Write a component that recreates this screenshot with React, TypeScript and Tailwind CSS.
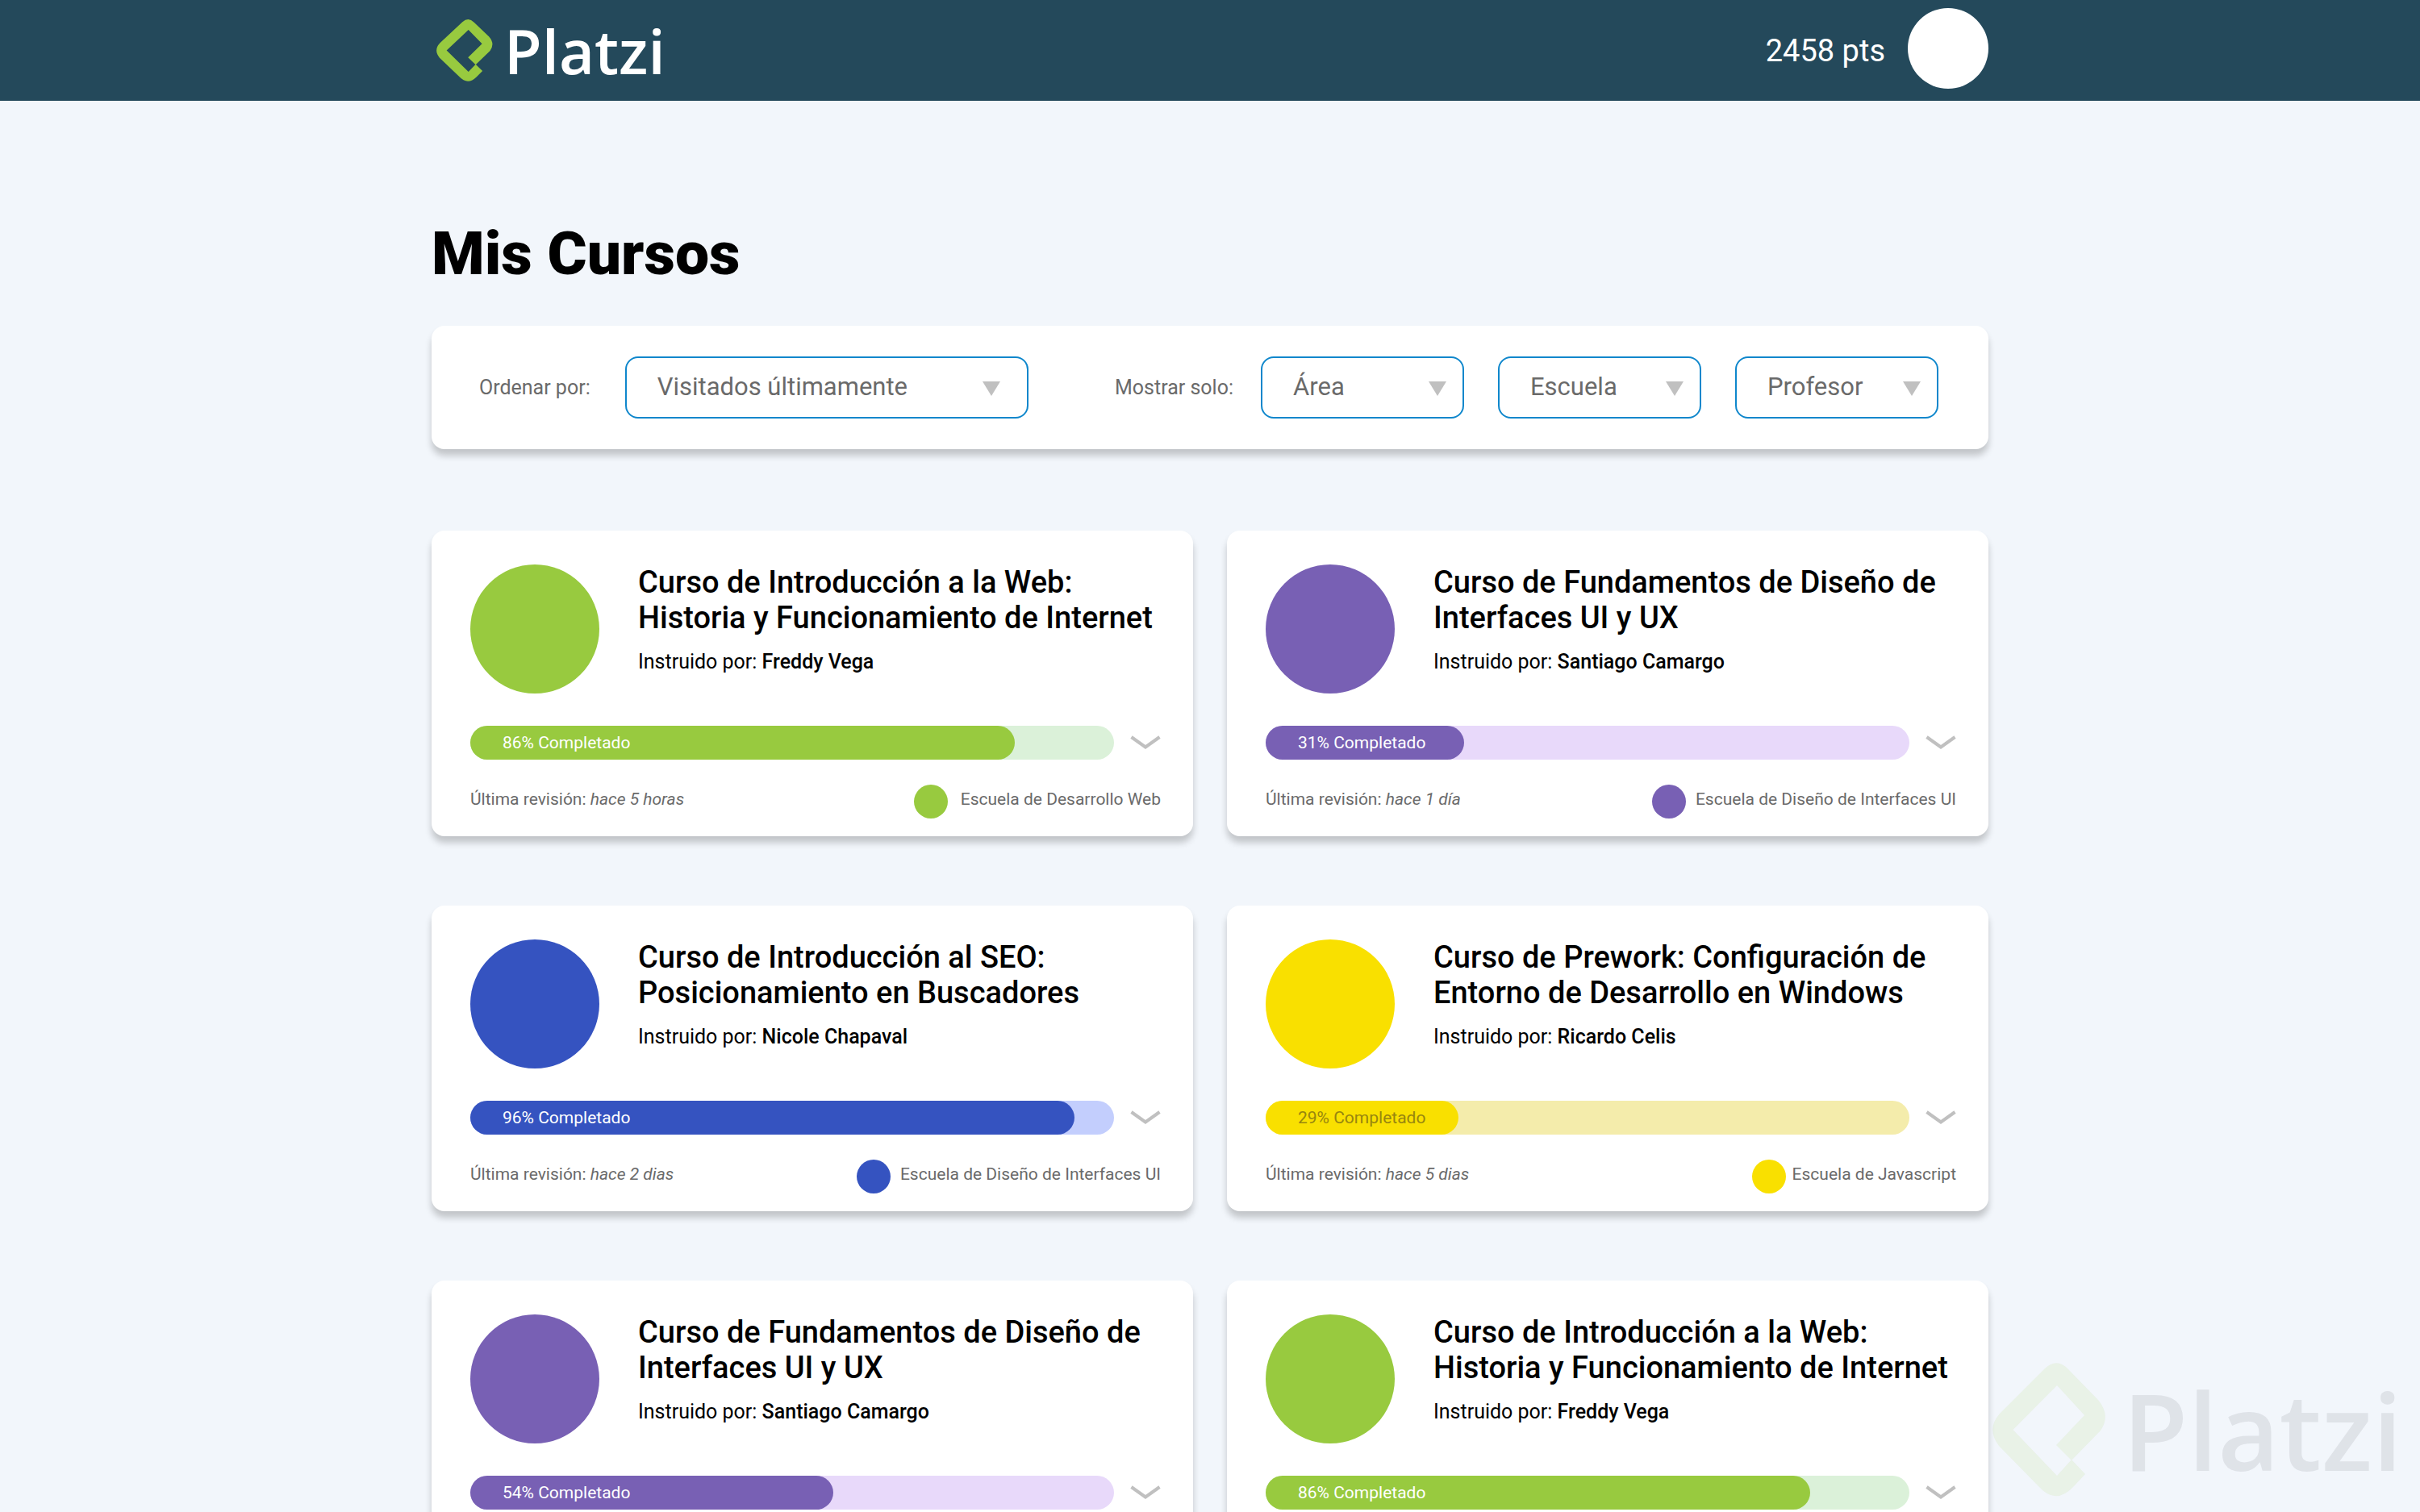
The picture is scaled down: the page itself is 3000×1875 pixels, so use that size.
import React from "react";

type School = {
  name: string;
  gap: string;
};

type Course = {
  title: string[];
  teacher: string;
  progress: number;
  fill: number;
  lastSeen: string;
  school: School;
  color: string;
  track: string;
  label: string;
};

const web: School = { name: "Escuela de Desarrollo Web", gap: "gap-4" };
const ui: School = { name: "Escuela de Diseño de Interfaces UI", gap: "gap-3" };
const js: School = { name: "Escuela de Javascript", gap: "gap-2" };

const courses: Course[] = [
  {
    title: ["Curso de Introducción a la Web:", "Historia y Funcionamiento de Internet"],
    teacher: "Freddy Vega",
    progress: 86,
    fill: 84.6,
    lastSeen: "hace 5 horas",
    school: web,
    color: "bg-[#98ca3f]",
    track: "bg-[#dbf1d9]",
    label: "text-white",
  },
  {
    title: ["Curso de Fundamentos de Diseño de", "Interfaces UI y UX"],
    teacher: "Santiago Camargo",
    progress: 31,
    fill: 30.8,
    lastSeen: "hace 1 día",
    school: ui,
    color: "bg-[#7860b4]",
    track: "bg-[#e8d9fa]",
    label: "text-white",
  },
  {
    title: ["Curso de Introducción al SEO:", "Posicionamiento en Buscadores"],
    teacher: "Nicole Chapaval",
    progress: 96,
    fill: 93.8,
    lastSeen: "hace 2 dias",
    school: ui,
    color: "bg-[#3553c0]",
    track: "bg-[#c3cefd]",
    label: "text-white",
  },
  {
    title: ["Curso de Prework: Configuración de", "Entorno de Desarrollo en Windows"],
    teacher: "Ricardo Celis",
    progress: 29,
    fill: 30,
    lastSeen: "hace 5 dias",
    school: js,
    color: "bg-[#f9e000]",
    track: "bg-[#f4ecab]",
    label: "text-[#98860f]",
  },
  {
    title: ["Curso de Fundamentos de Diseño de", "Interfaces UI y UX"],
    teacher: "Santiago Camargo",
    progress: 54,
    fill: 56.4,
    lastSeen: "hace 1 día",
    school: ui,
    color: "bg-[#7860b4]",
    track: "bg-[#e8d9fa]",
    label: "text-white",
  },
  {
    title: ["Curso de Introducción a la Web:", "Historia y Funcionamiento de Internet"],
    teacher: "Freddy Vega",
    progress: 86,
    fill: 84.6,
    lastSeen: "hace 5 horas",
    school: web,
    color: "bg-[#98ca3f]",
    track: "bg-[#dbf1d9]",
    label: "text-white",
  },
];

const LogoMark = ({ className }: { className: string }) => (
  <svg
    viewBox="0 0 141 166"
    preserveAspectRatio="none"
    className={className}
    fill="#98ca3f"
    aria-hidden="true"
  >
    <path d="M98 121L134 84Q147 65 131 46L94 8Q80 -7 65 7L9 63Q-8 82 8 103L57 153Q78 177 100 154L115 138L98 120L80 140L25.5 83L80 28L114 65L79 102Z" />
  </svg>
);

const Header = () => {
  return (
    <header className="bg-[#24495b]">
      <div className="mx-auto flex h-[125px] w-11/12 max-w-[1930px] items-center justify-between">
        <a href="#" className="flex items-center gap-[14px] pl-[6px]">
          <LogoMark className="h-[77px] w-[70px]" />
          <span className="font-['Open_Sans',sans-serif] text-[76px] leading-[100px] font-semibold text-white">
            Platzi
          </span>
        </a>
        <div className="flex items-center gap-[28px]">
          <p className="text-[38px] leading-[44px] text-white">2458 pts</p>
          <div className="mb-[5px] h-[100px] w-[100px] rounded-full bg-white" />
        </div>
      </div>
    </header>
  );
};

type FilterProps = {
  id: string;
  label: string;
  option: string;
  width: string;
  arrow: string;
};

const Filter = ({ id, label, option, width, arrow }: FilterProps) => {
  return (
    <div className={`relative ${width}`}>
      <select
        id={id}
        aria-label={label}
        className="block h-[77px] w-full appearance-none rounded-[16px] border-2 border-[#0f87cc] bg-white pl-[38px] text-[31px] text-[#6a6a6a]"
      >
        <option>{option}</option>
      </select>
      <svg
        viewBox="0 0 22 18"
        className={`pointer-events-none absolute top-[31px] h-[18px] w-[22px] ${arrow}`}
        fill="#c0c0c0"
        aria-hidden="true"
      >
        <path d="M0 0H22L11 18Z" />
      </svg>
    </div>
  );
};

const Filters = () => {
  return (
    <div className="mt-[46px] flex flex-wrap items-center justify-between gap-6 rounded-[16px] bg-white py-[38px] pr-[62px] pl-[59px] text-[25px] text-[#6a6a6a] shadow-[0_8px_8px_rgba(0,0,0,0.2)]">
      <div className="flex items-center gap-[43px]">
        <label htmlFor="order" className="leading-[30px]">
          Ordenar por:
        </label>
        <Filter
          id="order"
          label="Ordenar por"
          option="Visitados últimamente"
          width="w-[500px]"
          arrow="right-[35px]"
        />
      </div>
      <div className="flex items-center gap-[42px]">
        <div className="flex items-center gap-[34px]">
          <label htmlFor="area" className="leading-[30px]">
            Mostrar solo:
          </label>
          <Filter id="area" label="Área" option="Área" width="w-[252px]" arrow="right-[22px]" />
        </div>
        <Filter
          id="school"
          label="Escuela"
          option="Escuela"
          width="w-[252px]"
          arrow="right-[22px]"
        />
        <Filter
          id="teacher"
          label="Profesor"
          option="Profesor"
          width="w-[252px]"
          arrow="right-[22px]"
        />
      </div>
    </div>
  );
};

const CourseCard = ({ course }: { course: Course }) => {
  return (
    <article className="rounded-[16px] bg-white pt-[42px] pr-[40px] pb-[22px] pl-[48px] shadow-[0_8px_8px_rgba(0,0,0,0.2)]">
      <div className="flex gap-[48px]">
        <div className={`h-[160px] w-[160px] shrink-0 rounded-full ${course.color}`} />
        <div>
          <h2 className="text-[38px] leading-[44px] font-medium">
            {course.title[0]}
            <br />
            {course.title[1]}
          </h2>
          <p className="mt-4 text-[25px] leading-[34px]">
            Instruido por: <span className="font-medium">{course.teacher}</span>
          </p>
        </div>
      </div>
      <div className="mt-[40px] flex items-center gap-[20px]">
        <div className={`h-[42px] flex-1 rounded-full ${course.track}`}>
          <div
            className={`flex h-full items-center rounded-full pl-[40px] ${course.color}`}
            style={{ width: `${course.fill}%` }}
          >
            <span className={`text-[21px] leading-[26px] whitespace-nowrap ${course.label}`}>
              {course.progress}% Completado
            </span>
          </div>
        </div>
        <button type="button" aria-label="Ver detalles">
          <svg
            viewBox="0 0 38 18"
            className="h-[18px] w-[38px]"
            fill="none"
            stroke="#c0c0c0"
            strokeWidth="4"
            aria-hidden="true"
          >
            <path d="M1.5 2L19 14.5L36.5 2" />
          </svg>
        </button>
      </div>
      <div className="mt-[31px] flex items-start justify-between text-[21px] leading-[36px] text-[#6a6a6a]">
        <p>
          Última revisión: <em>{course.lastSeen}</em>
        </p>
        <div className={`flex items-start ${course.school.gap}`}>
          <div className={`h-[42px] w-[42px] rounded-full ${course.color}`} />
          <p>{course.school.name}</p>
        </div>
      </div>
    </article>
  );
};

const Watermark = () => {
  return (
    <div className="pointer-events-none fixed right-[22px] bottom-[19px] flex items-center gap-[20px] opacity-10">
      <LogoMark className="h-[166px] w-[141px]" />
      <span className="font-['Open_Sans',sans-serif] text-[132px] leading-[166px] font-semibold text-[#40404a]">
        Platzi
      </span>
    </div>
  );
};

export default function App() {
  return (
    <div className="min-h-screen bg-[#f2f6fb] font-['Roboto',sans-serif] text-black">
      <Header />
      <main className="mx-auto w-11/12 max-w-[1930px] pt-[145px]">
        <h1 className="text-[75px] leading-[88px] font-black">Mis Cursos</h1>
        <Filters />
        <section className="mt-[101px] grid grid-cols-1 gap-x-[42px] gap-y-[86px] pb-[86px] lg:grid-cols-2">
          {courses.map((course, i) => (
            <CourseCard key={i} course={course} />
          ))}
        </section>
      </main>
      <Watermark />
    </div>
  );
}
